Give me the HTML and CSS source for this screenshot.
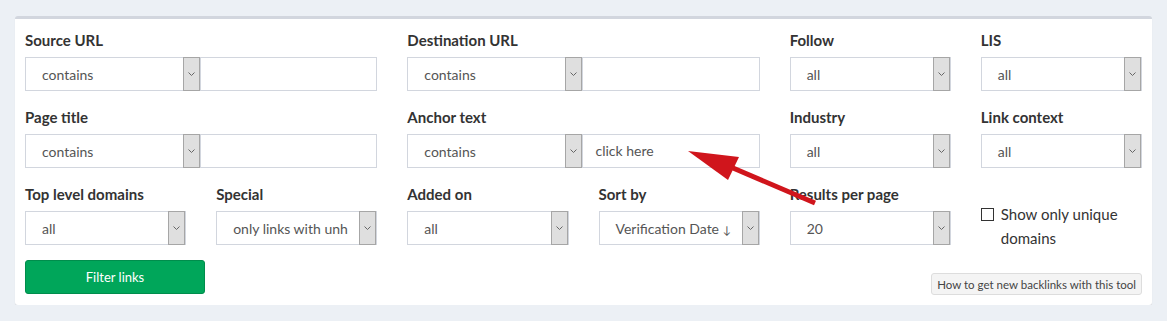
FILE: index.html
```html
<!DOCTYPE html>
<html lang="en">
<head>
    <meta charset="UTF-8">
    <meta name="viewport" content="width=device-width, initial-scale=1.0">
    <title>Link Filter</title>
    <link rel="stylesheet" href="styles.css">
</head>
<body>
    <div class="box">
        <form class="filters">
            <div class="field span-2">
                <label>Source URL</label>
                <div class="input-group">
                    <div class="select"><span class="select-text">contains</span><span class="select-btn"><svg width="7" height="4" viewBox="0 0 7 4"><polyline points="0.5,0.5 3.5,3.5 6.5,0.5" /></svg></span></div>
                    <div class="text-input"></div>
                </div>
            </div>
            <div class="field span-2">
                <label>Destination URL</label>
                <div class="input-group">
                    <div class="select"><span class="select-text">contains</span><span class="select-btn"><svg width="7" height="4" viewBox="0 0 7 4"><polyline points="0.5,0.5 3.5,3.5 6.5,0.5" /></svg></span></div>
                    <div class="text-input"></div>
                </div>
            </div>
            <div class="field">
                <label>Follow</label>
                <div class="select"><span class="select-text">all</span><span class="select-btn"><svg width="7" height="4" viewBox="0 0 7 4"><polyline points="0.5,0.5 3.5,3.5 6.5,0.5" /></svg></span></div>
            </div>
            <div class="field">
                <label>LIS</label>
                <div class="select"><span class="select-text">all</span><span class="select-btn"><svg width="7" height="4" viewBox="0 0 7 4"><polyline points="0.5,0.5 3.5,3.5 6.5,0.5" /></svg></span></div>
            </div>

            <div class="field span-2">
                <label>Page title</label>
                <div class="input-group">
                    <div class="select"><span class="select-text">contains</span><span class="select-btn"><svg width="7" height="4" viewBox="0 0 7 4"><polyline points="0.5,0.5 3.5,3.5 6.5,0.5" /></svg></span></div>
                    <div class="text-input"></div>
                </div>
            </div>
            <div class="field span-2">
                <label>Anchor text</label>
                <div class="input-group">
                    <div class="select"><span class="select-text">contains</span><span class="select-btn"><svg width="7" height="4" viewBox="0 0 7 4"><polyline points="0.5,0.5 3.5,3.5 6.5,0.5" /></svg></span></div>
                    <div class="text-input">click here</div>
                </div>
            </div>
            <div class="field">
                <label>Industry</label>
                <div class="select"><span class="select-text">all</span><span class="select-btn"><svg width="7" height="4" viewBox="0 0 7 4"><polyline points="0.5,0.5 3.5,3.5 6.5,0.5" /></svg></span></div>
            </div>
            <div class="field">
                <label>Link context</label>
                <div class="select"><span class="select-text">all</span><span class="select-btn"><svg width="7" height="4" viewBox="0 0 7 4"><polyline points="0.5,0.5 3.5,3.5 6.5,0.5" /></svg></span></div>
            </div>

            <div class="field">
                <label>Top level domains</label>
                <div class="select"><span class="select-text">all</span><span class="select-btn"><svg width="7" height="4" viewBox="0 0 7 4"><polyline points="0.5,0.5 3.5,3.5 6.5,0.5" /></svg></span></div>
            </div>
            <div class="field">
                <label>Special</label>
                <div class="select"><span class="select-text">only links with unh</span><span class="select-btn"><svg width="7" height="4" viewBox="0 0 7 4"><polyline points="0.5,0.5 3.5,3.5 6.5,0.5" /></svg></span></div>
            </div>
            <div class="field">
                <label>Added on</label>
                <div class="select"><span class="select-text">all</span><span class="select-btn"><svg width="7" height="4" viewBox="0 0 7 4"><polyline points="0.5,0.5 3.5,3.5 6.5,0.5" /></svg></span></div>
            </div>
            <div class="field">
                <label>Sort by</label>
                <div class="select"><span class="select-text">Verification Date <span class="sort-arrow">↓</span></span><span class="select-btn"><svg width="7" height="4" viewBox="0 0 7 4"><polyline points="0.5,0.5 3.5,3.5 6.5,0.5" /></svg></span></div>
            </div>
            <div class="field">
                <label>Results per page</label>
                <div class="select"><span class="select-text">20</span><span class="select-btn"><svg width="7" height="4" viewBox="0 0 7 4"><polyline points="0.5,0.5 3.5,3.5 6.5,0.5" /></svg></span></div>
            </div>
            <div class="field checkbox-field">
                <span class="checkbox"></span>
                <span class="checkbox-label">Show only unique domains</span>
            </div>

            <div class="actions">
                <button type="button" class="btn-filter">Filter links</button>
                <button type="button" class="btn-help">How to get new backlinks with this tool</button>
            </div>
        </form>
    </div>

    <svg class="annotation" width="1167" height="321" viewBox="0 0 1167 321">
        <line x1="733" y1="168" x2="815" y2="203" stroke="#d0151c" stroke-width="5" />
        <polygon points="688,151 739,157 728,180" fill="#d0151c" />
    </svg>
</body>
</html>
```

FILE: styles.css
```css
body {
    margin: 0;
    background-color: #ecf0f5;
    font-family: "Lato", "Liberation Sans", sans-serif;
    color: #333;
}
.box {
    margin: 16px 15px 0;
    background: #fff;
    border-top: 3px solid #d2d6de;
    border-radius: 3px;
    box-shadow: 0 1px 1px rgba(0, 0, 0, 0.1);
    padding: 11px 10px 11px;
}
.filters {
    display: grid;
    grid-template-columns: repeat(6, minmax(0, 1fr));
    column-gap: 30px;
    row-gap: 16px;
    margin: 0;
}
.span-2 {
    grid-column: span 2;
}
.field label {
    display: block;
    font-size: 15px;
    font-weight: bold;
    line-height: 20px;
    margin-bottom: 7px;
    white-space: nowrap;
}
.input-group {
    display: flex;
}
.input-group .select,
.input-group .text-input {
    flex: 0 0 50%;
    min-width: 0;
}
.select {
    display: flex;
    align-items: center;
    height: 34px;
    box-sizing: border-box;
    border: 1px solid #d2d6de;
    background: #fff;
}
.select-text {
    flex: 1;
    min-width: 0;
    padding-left: 16px;
    font-size: 14px;
    color: #555;
    white-space: nowrap;
    overflow: hidden;
}
.sort-arrow {
    font-size: 11px;
}
.select-btn {
    align-self: stretch;
    margin: -1px 0;
    width: 17px;
    box-sizing: border-box;
    border: 1px solid #a6a6a6;
    background: #dfdfdf;
    display: flex;
    align-items: center;
    justify-content: center;
    flex-shrink: 0;
}
.select-btn polyline {
    fill: none;
    stroke: #666;
    stroke-width: 1;
}
.text-input {
    height: 34px;
    box-sizing: border-box;
    border: 1px solid #d2d6de;
    border-left: none;
    padding-left: 12px;
    font-size: 14px;
    line-height: 32px;
    color: #555;
}
.checkbox-field {
    display: flex;
    align-items: flex-start;
    padding-top: 18px;
    margin-bottom: -8px;
}
.checkbox {
    width: 13px;
    height: 13px;
    box-sizing: border-box;
    border: 1px solid #333;
    margin-top: 6px;
    margin-right: 7px;
    flex-shrink: 0;
}
.checkbox-label {
    font-size: 15px;
    line-height: 24px;
}
.actions {
    grid-column: 1 / -1;
    display: flex;
    justify-content: space-between;
    align-items: flex-end;
    margin-top: -1px;
}
.btn-filter {
    width: 180px;
    height: 34px;
    background: #00a65a;
    border: 1px solid #008d4c;
    border-radius: 3px;
    color: #fff;
    font-family: inherit;
    font-size: 13px;
    cursor: pointer;
}
.btn-help {
    height: 22px;
    padding: 0 5px;
    background: #f4f4f4;
    border: 1px solid #ddd;
    border-radius: 3px;
    color: #444;
    font-family: inherit;
    font-size: 11.5px;
    margin-bottom: -1px;
}
.annotation {
    position: absolute;
    left: 0;
    top: 0;
    pointer-events: none;
}
```
